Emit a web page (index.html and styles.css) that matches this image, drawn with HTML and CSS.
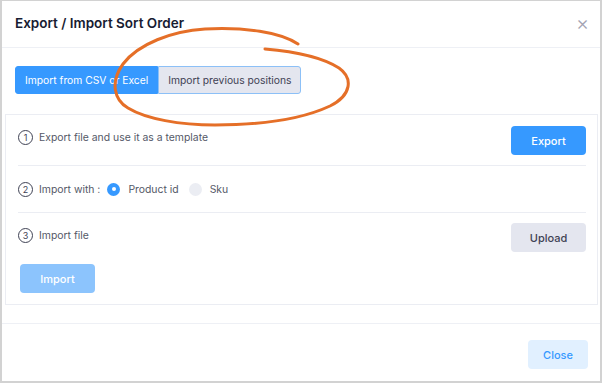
FILE: index.html
```html
<!DOCTYPE html>
<html lang="en">
<head>
<meta charset="UTF-8">
<meta name="viewport" content="width=device-width, initial-scale=1.0">
<title>Export / Import Sort Order</title>
<link rel="stylesheet" href="styles.css">
</head>
<body>

<div class="modal">
    <div class="modal-header">
        <h2>Export / Import Sort Order</h2>
        <span class="close">&times;</span>
    </div>

    <div class="modal-body">
        <div class="tabs">
            <button type="button" class="tab active">Import from CSV or Excel</button>
            <button type="button" class="tab">Import previous positions</button>
        </div>

        <div class="card">
            <div class="step step-export">
                <div class="step-label"><span class="num">1</span>Export file and use it as a template</div>
                <button type="button" class="btn btn-primary">Export</button>
            </div>
            <div class="step step-radio">
                <div class="step-label"><span class="num">2</span>Import with :</div>
                <label class="radio"><span class="dot checked"></span>Product id</label>
                <label class="radio"><span class="dot"></span>Sku</label>
            </div>
            <div class="step step-file">
                <div class="step-label"><span class="num">3</span>Import file</div>
                <button type="button" class="btn btn-secondary">Upload</button>
            </div>
            <button type="button" class="btn btn-primary btn-disabled">Import</button>
        </div>
    </div>

    <div class="modal-footer">
        <button type="button" class="btn btn-light">Close</button>
    </div>

    <!-- annotation drawn over the tabs -->
    <svg class="annotation" width="602" height="383" viewBox="0 0 602 383">
        <path d="M298 44 C280 32, 245 27, 205 29 C172 31, 138 44, 123 64 C110 82, 114 100, 128 108 C146 119, 180 125, 215 125 C255 125, 300 120, 330 106 C352 95, 353 78, 339 68 C325 59, 300 52, 265 49"
              fill="none" stroke="#e56f28" stroke-width="3" stroke-linecap="round"/>
    </svg>
</div>

</body>
</html>
```

FILE: styles.css
```css
* {
    box-sizing: border-box;
}

html, body {
    margin: 0;
    padding: 0;
}

body {
    font-family: Inter, "Noto Sans", sans-serif;
    color: #3f4254;
    background: #fff;
}

.modal {
    position: relative;
    width: 602px;
    height: 383px;
    border: 2px solid #d2d2d2;
    border-top-width: 1px;
    display: flex;
    flex-direction: column;
}

.modal-header {
    height: 47px;
    display: flex;
    align-items: center;
    justify-content: space-between;
    padding: 0 11px 2px 13px;
    border-bottom: 1px solid #eef0f5;
}

.modal-header h2 {
    margin: 0;
    font-size: 13.5px;
    font-weight: 600;
    color: #181c32;
}

.close {
    font-size: 20px;
    color: #a3a3b3;
    line-height: 1;
    font-weight: 300;
}

.modal-body {
    padding: 18px 2px 0 3px;
}

.tabs {
    display: flex;
    margin-left: 10px;
}

button {
    font-family: inherit;
    cursor: pointer;
}

.tab {
    height: 28px;
    padding: 0 9px;
    font-size: 10.3px;
    font-weight: 400;
    border: 1px solid #8cc0f7;
    background: #e4e6ef;
    color: #3f4254;
}

.tab:first-child {
    background: #3699ff;
    border-color: #3699ff;
    color: #fff;
    border-radius: 3px 0 0 3px;
}

.tab:last-child {
    border-radius: 0 3px 3px 0;
}

.card {
    margin-top: 20px;
    border: 1px solid #ebedf3;
    padding: 11px 11px 11px 12px;
}

.step {
    display: flex;
    align-items: center;
    border-bottom: 1px solid #ebedf3;
}

.step-export {
    align-items: flex-start;
    justify-content: space-between;
    padding-bottom: 10px;
}

.step-export .step-label {
    padding-top: 4px;
}

.step-radio {
    height: 47px;
}

.step-file {
    justify-content: space-between;
    border-bottom: none;
    padding-top: 10px;
}

.step-file .step-label {
    padding-bottom: 4px;
}

.step-label {
    display: flex;
    align-items: center;
    font-size: 10.4px;
    color: #545867;
}

.num {
    width: 15px;
    height: 15px;
    border: 1.3px solid #3f4254;
    border-radius: 50%;
    display: inline-flex;
    align-items: center;
    justify-content: center;
    font-size: 9px;
    margin-right: 6px;
    color: #3f4254;
}

.radio {
    display: flex;
    align-items: center;
    font-size: 10.4px;
    color: #545867;
    margin-left: 7px;
}

.radio + .radio {
    margin-left: 10px;
}

.dot {
    width: 13px;
    height: 13px;
    border-radius: 50%;
    background: #ebedf3;
    margin-right: 8px;
    display: inline-flex;
    align-items: center;
    justify-content: center;
}

.dot.checked {
    background: #3699ff;
}

.dot.checked::after {
    content: "";
    width: 4px;
    height: 4px;
    border-radius: 50%;
    background: #fff;
}

.btn {
    width: 75px;
    height: 29px;
    border: none;
    border-radius: 4px;
    font-size: 11px;
    font-weight: 500;
}

.btn-primary {
    background: #3699ff;
    color: #fff;
}

.btn-secondary {
    background: #e4e6ef;
    color: #3f4254;
}

.btn-disabled {
    margin: 12px 0 0 2px;
    background: #8cc4fd;
    cursor: default;
}

.btn-light {
    width: 60px;
    background: #e1f0ff;
    color: #3699ff;
}

.modal-footer {
    margin-top: 18px;
    border-top: 1px solid #eef0f5;
    padding: 16px 12px 0 0;
    display: flex;
    justify-content: flex-end;
}

.annotation {
    position: absolute;
    left: -2px;
    top: -1px;
    pointer-events: none;
}
```
